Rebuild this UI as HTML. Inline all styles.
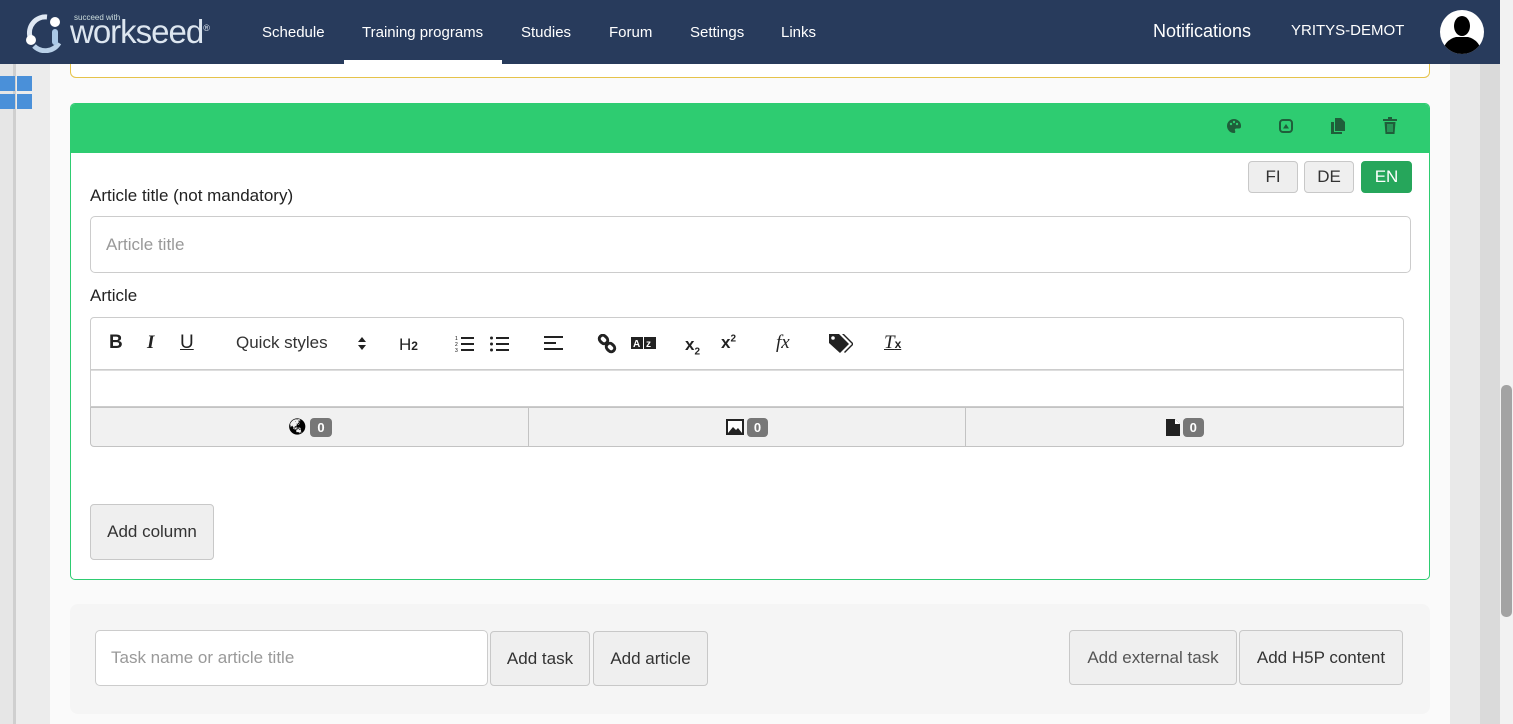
<!DOCTYPE html>
<html><head><meta charset="utf-8"><style>
*{box-sizing:border-box;margin:0;padding:0}
body{width:1513px;height:724px;overflow:hidden;background:#ececec;font-family:"Liberation Sans",Arial,sans-serif;position:relative}
.nav{position:absolute;left:0;top:0;width:1500px;height:64px;background:#283b5c;color:#fff}
.nav a{position:absolute;top:24px;font-size:15px;color:#fff}
.main{position:absolute;left:50px;top:64px;width:1400px;height:660px;background:#fafafa}
.r1{position:absolute;left:1450px;top:64px;width:30px;height:660px;background:#e9e9e9}
.r2{position:absolute;left:1480px;top:0;width:20px;height:724px;background:#dadada}
.sb{position:absolute;left:1500px;top:0;width:13px;height:724px;background:#f2f2f2}
.thumb{position:absolute;left:1501px;top:385px;width:11px;height:232px;background:#a3a3a3;border-radius:5px}
.l1{position:absolute;left:0;top:64px;width:16px;height:660px;background:#e6e6e6;border-right:3px solid #cfcfcf}
.yel{position:absolute;left:70px;top:54px;width:1360px;height:24px;background:#fff;border:1px solid #e6c34a;border-top:none;border-radius:0 0 6px 6px}
.card{position:absolute;left:70px;top:103px;width:1360px;height:477px;background:#fff;border:1px solid #2ecc71;border-radius:5px;overflow:hidden}
.ch{height:49px;background:#2ecc71}
.btn{position:absolute;background:#efefef;border:1px solid #c8c8c8;border-radius:4px;color:#333;font-size:17px;display:flex;align-items:center;justify-content:center}
.inp{position:absolute;background:#fff;border:1px solid #ccc;border-radius:5px;color:#999;font-size:17px;padding-left:15px;display:flex;align-items:center}
.lbl{position:absolute;font-size:17px;color:#222}
.tb{position:absolute;left:19px;top:213px;width:1314px;height:90px;border:1px solid #ccc;border-radius:4px 4px 0 0}
.tb span,.tb svg{position:absolute;top:14px;font-size:19px;color:#222}
.bar{position:absolute;left:19px;top:303px;width:1314px;height:40px;background:#f1f1f1;border:1px solid #c3c3c3;border-radius:0 0 4px 4px;display:flex}
.bar div{flex:1;border-right:1px solid #c3c3c3;display:flex;align-items:center;justify-content:center;gap:3px}
.bar div:last-child{border:none}
.badge{background:#777;color:#fff;font-size:13px;font-weight:bold;border-radius:4px;padding:2px 7px}
.bot{position:absolute;left:70px;top:604px;width:1360px;height:110px;background:#f5f5f5;border-radius:8px}
</style></head><body>
<div class="l1"></div>
<div class="main"></div>
<div class="r1"></div><div class="r2"></div><div class="sb"></div><div class="thumb"></div>
<div style="position:absolute;left:0;top:76px;width:33px;height:34px">
<div style="position:absolute;left:0;top:0;width:15px;height:15px;background:#4a90d9"></div>
<div style="position:absolute;left:17px;top:0;width:15px;height:15px;background:#4a90d9"></div>
<div style="position:absolute;left:0;top:18px;width:15px;height:15px;background:#4a90d9"></div>
<div style="position:absolute;left:17px;top:18px;width:15px;height:15px;background:#4a90d9"></div></div>
<div class="yel"></div>
<div class="nav">
<svg style="position:absolute;left:25px;top:13px" width="40" height="40" viewBox="0 0 40 40"><path d="M22 4 A16 16 0 0 0 5 24" stroke="#dfe8f3" stroke-width="5" fill="none"/><path d="M9 33 A16 16 0 0 0 34 30" stroke="#b9d0e8" stroke-width="5" fill="none"/><circle cx="6" cy="27" r="5" fill="#fff"/><circle cx="30" cy="9" r="5" fill="#fff"/><rect x="27" y="16" width="6" height="16" rx="3" fill="#a9c7e6"/></svg>
<div style="position:absolute;left:74px;top:13px;font-size:8px;color:#cdd">succeed with</div>
<div style="position:absolute;left:70px;top:13px;font-size:33px;color:#dde6f0;letter-spacing:-1px">workseed<sup style="font-size:9px">®</sup></div>
<a style="left:262px">Schedule</a><a style="left:362px">Training programs</a><a style="left:521px">Studies</a><a style="left:609px">Forum</a><a style="left:690px">Settings</a><a style="left:781px">Links</a>
<div style="position:absolute;left:344px;top:60px;width:158px;height:4px;background:#fff"></div>
<a style="left:1153px;top:21px;font-size:18px">Notifications</a>
<a style="left:1291px;top:22px;font-size:15px">YRITYS-DEMOT</a>
<svg style="position:absolute;left:1440px;top:10px" width="44" height="44" viewBox="0 0 44 44"><clipPath id="c"><circle cx="22" cy="22" r="22"/></clipPath><circle cx="22" cy="22" r="22" fill="#fff"/><g clip-path="url(#c)"><ellipse cx="22" cy="16" rx="8" ry="10" fill="#000"/><path d="M2 44 Q4 30 16 27 L28 27 Q40 30 42 44Z" fill="#000"/></g></svg>
</div>
<div class="card"><div class="ch"></div>
<svg style="position:absolute;left:1155px;top:14px" width="16" height="16" viewBox="0 0 16 16"><path d="M8 1a7 7 0 0 0 0 14c1.5 0 1.5-1.5 1-2.5s0-2 1.5-2H13a2 2 0 0 0 2-2A7 7 0 0 0 8 1z" fill="#1f5e3a"/><circle cx="5" cy="6" r="1.2" fill="#2ecc71"/><circle cx="8" cy="4" r="1.2" fill="#2ecc71"/><circle cx="11" cy="6" r="1.2" fill="#2ecc71"/></svg>
<svg style="position:absolute;left:1208px;top:15px" width="14" height="14" viewBox="0 0 14 14"><rect x="1" y="1" width="12" height="12" rx="3" fill="none" stroke="#1f5e3a" stroke-width="2"/><path d="M4 9.5L7 5l3 4.5z" fill="#1f5e3a"/></svg>
<svg style="position:absolute;left:1260px;top:14px" width="14" height="16" viewBox="0 0 14 16"><path d="M4 0h6l4 4v9H4z M0 4h3v10h8v2H0z" fill="#1f5e3a"/></svg>
<svg style="position:absolute;left:1312px;top:13px" width="14" height="17" viewBox="0 0 14 17"><path d="M0 2h14v2H0z M5 0h4v2H5z M1.5 5h11l-1 12h-9z" fill="#1f5e3a"/><path d="M5 7v8M7 7v8M9 7v8" stroke="#2ecc71" stroke-width="1"/></svg>
<div class="btn" style="left:1177px;top:57px;width:50px;height:32px;background:#eee">FI</div>
<div class="btn" style="left:1233px;top:57px;width:50px;height:32px">DE</div>
<div class="btn" style="left:1290px;top:57px;width:51px;height:32px;background:#26a65b;border-color:#26a65b;color:#fff">EN</div>
<div class="lbl" style="left:19px;top:82px">Article title (not mandatory)</div>
<div class="inp" style="left:19px;top:112px;width:1321px;height:57px">Article title</div>
<div class="lbl" style="left:19px;top:182px">Article</div>
<div class="tb"><div style="position:absolute;left:0;right:0;top:51px;height:1px;background:#ccc"></div>
<div style="position:absolute;left:0;right:0;top:52px;height:37px;border-top:1px solid #ddd"></div>
<span style="left:18px;font-weight:bold">B</span><span style="left:56px;font-style:italic;font-weight:bold;font-family:'Liberation Serif'">I</span><span style="left:89px;text-decoration:underline">U</span>
<span style="left:145px;font-size:17px;top:15px;color:#333">Quick styles</span>
<svg style="left:267px;top:19px" width="8" height="13" viewBox="0 0 8 13"><path d="M4 0L8 5H0zM4 13L8 8H0z" fill="#222"/></svg>
<span style="left:308px;font-size:17px;top:17px">H<small style="font-size:12px;font-weight:bold">2</small></span>
<svg style="left:364px;top:17px" width="19" height="18" viewBox="0 0 19 18"><g fill="#222"><rect x="6" y="2" width="13" height="2"/><rect x="6" y="8" width="13" height="2"/><rect x="6" y="14" width="13" height="2"/></g><text x="0" y="5" font-size="5" font-family="Liberation Sans">1</text><text x="0" y="11" font-size="5" font-family="Liberation Sans">2</text><text x="0" y="17" font-size="5" font-family="Liberation Sans">3</text></svg>
<svg style="left:399px;top:17px" width="19" height="18" viewBox="0 0 19 18"><g fill="#222"><rect x="6" y="2" width="13" height="2"/><rect x="6" y="8" width="13" height="2"/><rect x="6" y="14" width="13" height="2"/><circle cx="1.5" cy="3" r="1.5"/><circle cx="1.5" cy="9" r="1.5"/><circle cx="1.5" cy="15" r="1.5"/></g></svg>
<svg style="left:453px;top:18px" width="19" height="14" viewBox="0 0 19 14"><g fill="#222"><rect x="0" y="0" width="19" height="2"/><rect x="0" y="6" width="12" height="2"/><rect x="0" y="12" width="19" height="2"/></g></svg>
<svg style="left:506px;top:16px" width="20" height="20" viewBox="0 0 20 20"><g fill="none" stroke="#222" stroke-width="3"><rect x="2" y="2" width="9" height="7" rx="3.5" transform="rotate(45 6.5 5.5)"/><rect x="9" y="10" width="9" height="7" rx="3.5" transform="rotate(45 13.5 13.5)"/></g></svg>
<svg style="left:540px;top:19px" width="25" height="12" viewBox="0 0 25 12"><rect width="25" height="12" fill="#222"/><rect x="12" y="0" width="1" height="12" fill="#fff"/><text x="2" y="10" font-size="10" font-weight="bold" fill="#fff" font-family="Liberation Sans">A</text><text x="15" y="10" font-size="10" font-weight="bold" fill="#fff" font-family="Liberation Sans">z</text></svg>
<span style="left:594px;font-size:17px;top:17px;font-weight:bold">x<sub style="font-size:10px">2</sub></span><span style="left:630px;font-size:17px;top:15px;font-weight:bold">x<sup style="font-size:10px">2</sup></span>
<span style="left:685px;font-family:'Liberation Serif';font-style:italic">fx</span>
<svg style="left:738px;top:16px" width="24" height="20" viewBox="0 0 24 20"><path d="M0 0h10l10 10-9 9L0 9z" fill="#222"/><circle cx="4" cy="4" r="1.8" fill="#fff"/><path d="M13 0h2l10 10-9 9-1-1 8-8z" fill="#222"/></svg>
<span style="left:793px;font-family:'Liberation Serif';font-style:italic;text-decoration:underline">T<small style="font-size:12px;font-style:normal;font-weight:bold;font-family:'Liberation Sans'">x</small></span>
</div>
<div class="bar"><div>🌏︎<span class="badge">0</span></div><div><svg width="18" height="16" viewBox="0 0 18 16"><rect width="18" height="16" fill="#222"/><rect x="2" y="2" width="14" height="12" fill="#fff"/><path d="M2 14l5-6 3 3 2-2 4 5z" fill="#222"/></svg><span class="badge">0</span></div><div><svg width="14" height="17" viewBox="0 0 14 17"><path d="M0 0h9l5 5v12H0z" fill="#222"/><path d="M9 0v5h5" fill="#fff"/></svg><span class="badge">0</span></div></div>
<div class="btn" style="left:19px;top:400px;width:124px;height:56px">Add column</div>
</div>
<div class="bot">
<div class="inp" style="left:25px;top:26px;width:393px;height:56px">Task name or article title</div>
<div class="btn" style="left:420px;top:27px;width:100px;height:55px">Add task</div>
<div class="btn" style="left:523px;top:27px;width:115px;height:55px">Add article</div>
<div class="btn" style="left:999px;top:26px;width:168px;height:55px;color:#555">Add external task</div>
<div class="btn" style="left:1169px;top:26px;width:164px;height:55px">Add H5P content</div>
</div>
</body></html>
